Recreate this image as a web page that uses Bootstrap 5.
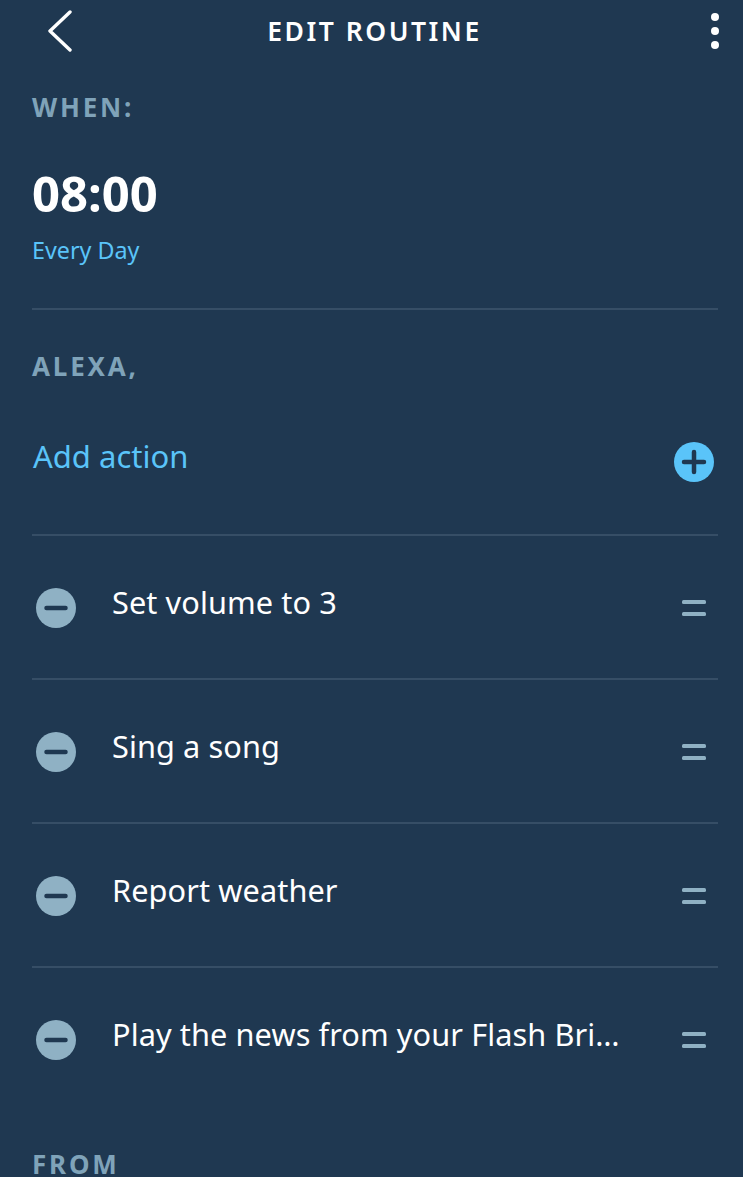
<!DOCTYPE html>
<html lang="en">
<head>
  <meta charset="UTF-8">
  <meta name="viewport" content="width=device-width, initial-scale=1">
  <title>Edit Routine</title>
  <link href="https://cdn.jsdelivr.net/npm/bootstrap@5.3.3/dist/css/bootstrap.min.css" rel="stylesheet">
  <style>
    html, body { height: 100%; overflow: hidden; }
    body { background: #1f3851; color: #fff; font-family: "Noto Sans", "Open Sans", sans-serif; }
    .top-bar { height: 62px; padding: 0 24px 0 30px; }
    .top-side { flex: 1 1 0; }
    .back-icon { margin-left: 16px; }
    .top-title { font-size: 26.5px; font-weight: 600; letter-spacing: 2.5px; line-height: 1; }
    .page-body { padding: 0 25px 0 32px; }
    .sec-label { color: #7fa3b9; font-size: 26px; font-weight: 700; letter-spacing: 2.8px; line-height: 30px; }
    .when-time { font-size: 49px; font-weight: 700; line-height: 56px; margin-top: 43px; }
    .when-repeat { color: #5ac4f9; font-size: 23.3px; line-height: 28px; margin-top: 15px; }
    .when-box { height: 248px; padding-top: 30px; }
    .divider-b { border-bottom: 2px solid #364e66; }
    .alexa-box { padding-top: 41px; }
    .add-row { height: 155px; padding-top: 55px; }
    .add-text { color: #5ac4f9; font-size: 31px; line-height: 40px; margin-left: 1px; }
    .add-icon { margin: 6px 4px 0 0; }
    .act-row { height: 144px; padding: 46px 12px 0 4px; }
    .act-text { font-size: 30.7px; letter-spacing: .1px; line-height: 40px; margin-left: 36px; flex: 1; white-space: nowrap; }
    .act-icon { margin-top: 6px; flex: none; }
    .drag-icon { margin-top: 18px; flex: none; }
    .from-label { line-height: 24px; margin-top: 40px; }
  </style>
</head>
<body>
<div class="top-bar d-flex align-items-center">
  <div class="top-side">
    <svg class="back-icon d-block" width="28" height="42" viewBox="0 0 28 42" fill="none" stroke="#fff" stroke-width="3.4" stroke-linecap="round" stroke-linejoin="round"><path d="M24 2 L4 21 L24 40"/></svg>
  </div>
  <div class="top-title">EDIT ROUTINE</div>
  <div class="top-side d-flex justify-content-end">
    <svg class="d-block" width="8" height="36" viewBox="0 0 8 36" fill="#fff"><circle cx="4" cy="4" r="4"/><circle cx="4" cy="18" r="4"/><circle cx="4" cy="32" r="4"/></svg>
  </div>
</div>

<div class="page-body">
  <div class="when-box divider-b">
    <div class="sec-label">WHEN:</div>
    <div class="when-time">08:00</div>
    <div class="when-repeat">Every Day</div>
  </div>

  <div class="alexa-box">
    <div class="sec-label">ALEXA,</div>
  </div>

  <div class="add-row divider-b d-flex justify-content-between align-items-start">
    <div class="add-text">Add action</div>
    <svg class="add-icon" width="40" height="40" viewBox="0 0 40 40"><circle cx="20" cy="20" r="20" fill="#5ac4f9"/><path d="M10 20H30M20 10V30" stroke="#1f3851" stroke-width="4.5" stroke-linecap="round"/></svg>
  </div>

  <div id="actions"></div>

  <div class="sec-label from-label">FROM</div>
</div>

<script>
const actions = ['Set volume to 3', 'Sing a song', 'Report weather', 'Play the news from your Flash Bri…'];

document.getElementById('actions').innerHTML = actions.map((a, i) => `
  <div class="act-row d-flex align-items-start ${i < actions.length - 1 ? 'divider-b' : ''}">
    <svg class="act-icon" width="40" height="40" viewBox="0 0 40 40"><circle cx="20" cy="20" r="20" fill="#8fb1c4"/><path d="M10.5 20H29.5" stroke="#1f3851" stroke-width="4.5" stroke-linecap="round"/></svg>
    <div class="act-text">${a}</div>
    <svg class="drag-icon" width="24" height="16" viewBox="0 0 24 16" fill="#8fb1c4"><rect width="24" height="4" y="0" rx="1.5"/><rect width="24" height="4" y="12" rx="1.5"/></svg>
  </div>`).join('');
</script>
<script src="https://cdn.jsdelivr.net/npm/bootstrap@5.3.3/dist/js/bootstrap.bundle.min.js"></script>
</body>
</html>
